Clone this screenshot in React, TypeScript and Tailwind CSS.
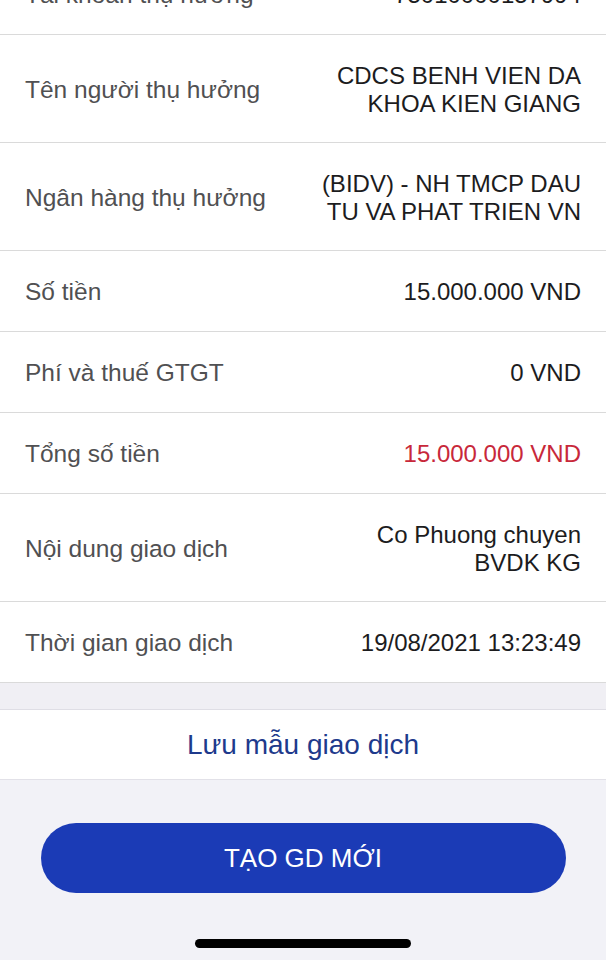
import React from "react";

type Row = {
  label: string;
  value: string[];
  red?: boolean;
};

const rows: Row[] = [
  { label: "Tài khoản thụ hưởng", value: ["75010000157994"] },
  { label: "Tên người thụ hưởng", value: ["CDCS BENH VIEN DA", "KHOA KIEN GIANG"] },
  { label: "Ngân hàng thụ hưởng", value: ["(BIDV) - NH TMCP DAU", "TU VA PHAT TRIEN VN"] },
  { label: "Số tiền", value: ["15.000.000 VND"] },
  { label: "Phí và thuế GTGT", value: ["0 VND"] },
  { label: "Tổng số tiền", value: ["15.000.000 VND"], red: true },
  { label: "Nội dung giao dịch", value: ["Co Phuong chuyen", "BVDK KG"] },
  { label: "Thời gian giao dịch", value: ["19/08/2021 13:23:49"] },
];

const DetailRow = ({ row, first }: { row: Row; first?: boolean }) => {
  const tall = row.value.length > 1;
  return (
    <div
      className={`flex items-center justify-between px-[25px] border-b border-[#dadada] bg-white ${
        tall ? "h-[108px]" : "h-[81px]"
      } ${first ? "-mt-[46px]" : ""}`}
    >
      <span className="text-[24.5px] leading-[28px] text-[#505052] pt-[2px]">{row.label}</span>
      <div
        className={`text-right text-[24px] leading-[28px] pt-[2px] ${
          row.red ? "text-[#c8283a]" : "text-[#1c1c1e]"
        }`}
      >
        {row.value.map((line) => (
          <div key={line}>{line}</div>
        ))}
      </div>
    </div>
  );
};

export default function App() {
  return (
    <div className="w-[606px] h-[960px] overflow-hidden bg-[#f2f2f7] flex flex-col font-['Liberation_Sans',Arial,sans-serif]">
      <div className="flex flex-col">
        {rows.map((row, i) => (
          <DetailRow key={row.label} row={row} first={i === 0} />
        ))}
      </div>

      <div className="h-[27px] shrink-0 bg-[#f0eff4] border-b border-[#dfdee5]" />

      <div className="h-[70px] shrink-0 bg-white border-b border-[#e2e1e8] flex items-center justify-center">
        <span className="text-[28px] text-[#1e3a8c]">Lưu mẫu giao dịch</span>
      </div>

      <div className="flex-1 flex flex-col items-center">
        <button className="mt-[43px] w-[525px] h-[70px] rounded-full bg-[#1b3bb6] text-white text-[26px]">
          TẠO GD MỚI
        </button>
        <div className="mt-[46px] w-[216px] h-[9px] rounded-full bg-black" />
      </div>
    </div>
  );
}
